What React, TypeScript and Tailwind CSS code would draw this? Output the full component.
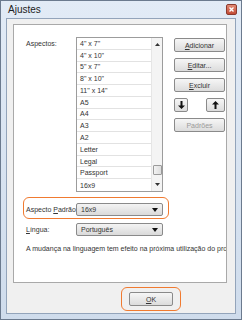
import React from 'react';

const items = ['4" x 7"', '4" x 10"', '5" x 7"', '8" x 10"', '11" x 14"', 'A5', 'A4', 'A3', 'A2', 'Letter', 'Legal', 'Passport', '16x9'];

function Btn({ children, className = '', disabled = false }: { children: React.ReactNode; className?: string; disabled?: boolean }) {
  return (
    <div
      className={`flex items-center justify-center rounded-[2px] border border-[#8a8a8a] bg-gradient-to-b from-[#f6f6f6] to-[#dcdcdc] ${disabled ? 'text-[#9a9a9a]' : 'text-[#333]'} ${className}`}
    >
      {children}
    </div>
  );
}

function Combo({ value }: { value: string }) {
  return (
    <div className="flex h-[13px] w-[87px] items-center justify-between rounded-[2px] border border-[#8a8a8a] bg-gradient-to-b from-[#f4f4f4] to-[#dadada] pl-[4px] pr-[4px] text-[#333]">
      <span>{value}</span>
      <svg width="6" height="4" viewBox="0 0 6 4">
        <path d="M0 0h6L3 4z" fill="#111" />
      </svg>
    </div>
  );
}

export default function App() {
  return (
    <div
      className="flex h-[320px] w-[242px] flex-col border border-[#6b7a8e] bg-gradient-to-b from-[#e2ebf6] to-[#cfdcec] px-[5px] pb-[5px] text-[7px] leading-none"
      style={{ fontFamily: '"Liberation Sans", Arial, sans-serif' }}
    >
      {/* title bar */}
      <div className="flex h-[17px] items-center justify-between pl-[2px]">
        <span className="text-[10px] text-[#222]">Ajustes</span>
        <div className="-mr-[1px] flex h-[11px] w-[11px] items-center justify-center rounded-[2px] border border-[#8b3a2e] bg-gradient-to-b from-[#e28a74] to-[#c24a35]">
          <svg width="5" height="5" viewBox="0 0 5 5">
            <path d="M0.5 0.5l4 4M4.5 0.5l-4 4" stroke="#fff" strokeWidth="1.4" />
          </svg>
        </div>
      </div>

      {/* body */}
      <div className="flex flex-1 flex-col border border-[#93a4ba] bg-[#f0f0f0]">
        <div className="relative ml-[6px] mt-[5px] h-[259px] w-[214px] overflow-hidden border border-[#a9a9a9] bg-white">
          <div className="flex pl-[12px] pt-[12px]">
            <div className="w-[50px] pt-[3px] text-[#333]">Aspectos:</div>
            <div className="flex h-[155px] w-[87px] border border-[#9c9c9c]">
              <div className="flex flex-1 flex-col">
                {items.map((it) => (
                  <div key={it} className="flex h-[11.85px] items-center border-b border-[#e2e2e2] pl-[3px] text-[#333] last:border-b-0">
                    {it}
                  </div>
                ))}
              </div>
              <div className="flex w-[11px] flex-col items-center border-l border-[#e6e6e6] bg-[#f4f4f4]">
                <svg className="mt-[5px]" width="5" height="3" viewBox="0 0 5 3">
                  <path d="M0 3h5L2.5 0z" fill="#333" />
                </svg>
                <div className="flex-1" />
                <div className="mb-[8px] h-[10px] w-[9px] rounded-[1px] border border-[#9a9a9a] bg-gradient-to-r from-[#f2f2f2] to-[#dedede]" />
                <svg className="mb-[5px]" width="5" height="3" viewBox="0 0 5 3">
                  <path d="M0 0h5L2.5 3z" fill="#333" />
                </svg>
              </div>
            </div>
            <div className="ml-[11px] mt-[1px] flex w-[51px] flex-col gap-[6px]">
              <Btn className="h-[14px]"><span><span className="underline">A</span>dicionar</span></Btn>
              <Btn className="h-[14px]"><span><span className="underline">E</span>ditar...</span></Btn>
              <Btn className="h-[14px]"><span><span className="underline">E</span>xcluir</span></Btn>
              <div className="flex justify-between">
                <Btn className="h-[14px] w-[14px]">
                  <svg width="7" height="8" viewBox="0 0 7 8">
                    <path d="M2.5 0h2v4.5H7L3.5 8 0 4.5h2.5z" fill="#111" />
                  </svg>
                </Btn>
                <Btn className="h-[14px] w-[19px]">
                  <svg width="7" height="8" viewBox="0 0 7 8">
                    <path d="M2.5 8h2V3.5H7L3.5 0 0 3.5h2.5z" fill="#111" />
                  </svg>
                </Btn>
              </div>
              <Btn className="h-[14px]" disabled>Padrões</Btn>
            </div>
          </div>

          <div className="relative mt-[11px] flex items-center pl-[12px]">
            <div className="pointer-events-none absolute left-[9px] top-[-6px] h-[22px] w-[146px] rounded-[6px] border-[1.5px] border-[#f07a30]" />
            <div className="w-[50px] text-[#333]">Aspecto <span className="underline">P</span>adrão</div>
            <Combo value="16x9" />
          </div>

          <div className="mt-[7px] flex items-center pl-[12px]">
            <div className="w-[50px] text-[#333]"><span className="underline">L</span>íngua:</div>
            <Combo value="Português" />
          </div>

          <div className="mt-[9px] whitespace-nowrap pl-[12px] text-[#333]">
            A mudança na linguagem tem efeito na próxima utilização do programa.
          </div>
        </div>

        <div className="relative ml-[122px] mt-[9px] w-[44px]">
          <div className="pointer-events-none absolute left-[-8px] top-[-5px] h-[24px] w-[60px] rounded-[6px] border-[1.5px] border-[#f07a30]" />
          <Btn className="h-[14px] border-[#3c7fb1]">
            <span><span className="underline">O</span>K</span>
          </Btn>
        </div>
      </div>
    </div>
  );
}
